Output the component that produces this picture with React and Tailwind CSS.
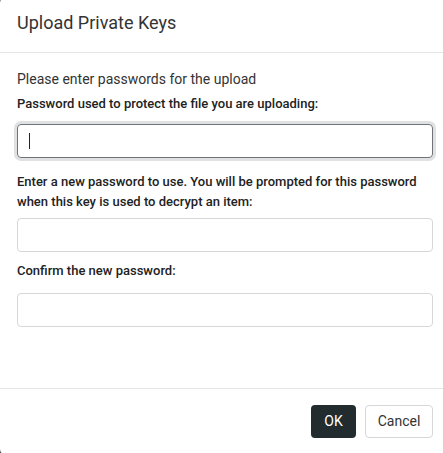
export default function App() {
  return (
    <div className="h-[453px] w-[443px] overflow-hidden bg-[#5a5a5a]" style={{ fontFamily: "Roboto, 'Liberation Sans', sans-serif" }}>
      <div className="mt-[-3px] h-[458px] w-[450px] rounded-md bg-white text-[#333]">
        {/* Header */}
        <div className="flex h-[56px] items-start border-b border-[#e6e6e6] px-[17px] pt-[15px]">
          <h1 className="text-[18px] leading-[22px] text-[#333]">Upload Private Keys</h1>
        </div>

        {/* Body */}
        <div className="h-[335px] px-[17px] pt-[16px]">
          <p className="text-[14px] leading-[20px] text-[#333]">Please enter passwords for the upload</p>

          <label className="mt-[5px] block text-[13px] font-medium leading-[20px] text-[#222]">
            Password used to protect the file you are uploading:
          </label>
          <div className="relative mt-[10px]">
            <input
              type="password"
              className="block h-[34px] w-[416px] rounded-[4px] border border-[#6f7479] px-3 text-[14px] shadow-[0_0_0_3px_#dfe1e3] outline-none"
            />
            {/* caret */}
            <span className="pointer-events-none absolute left-[12px] top-[9px] h-[16px] w-px bg-[#222]" />
          </div>

          <label className="mt-[14px] block w-[416px] text-[13px] font-medium leading-[20px] text-[#222]">
            Enter a new password to use. You will be prompted for this password when this key is used to decrypt an item:
          </label>
          <input
            type="password"
            className="mt-[6px] block h-[34px] w-[416px] rounded-[4px] border border-[#d5d7da] px-3 text-[14px] outline-none"
          />

          <label className="mt-[9px] block text-[13px] font-medium leading-[20px] text-[#222]">
            Confirm the new password:
          </label>
          <input
            type="password"
            className="mt-[12px] block h-[34px] w-[416px] rounded-[4px] border border-[#d5d7da] px-3 text-[14px] outline-none"
          />
        </div>

        {/* Footer */}
        <div className="flex justify-end gap-[9px] border-t border-[#e6e6e6] pr-[17px] pt-[16px]">
          <button className="h-[33px] w-[45px] rounded-[4px] bg-[#222b2e] text-[14px] text-white">OK</button>
          <button className="h-[33px] w-[68px] rounded-[4px] border border-[#d5d7da] bg-white text-[14px] text-[#333]">
            Cancel
          </button>
        </div>
      </div>
    </div>
  );
}
